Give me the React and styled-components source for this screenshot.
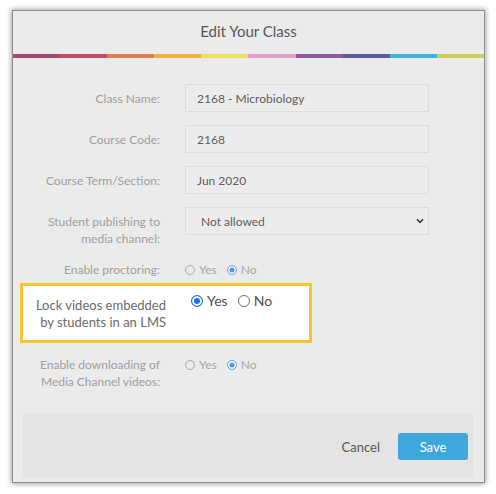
import React from 'react'
import styled, { createGlobalStyle } from 'styled-components'

const stripeColors = ['#a44b72', '#cb4a63', '#e07d4c', '#efb540', '#ebdf5e', '#e0a0c6', '#8f5b9c', '#5b5b9c', '#3fb6dc', '#c9d05c']

const GlobalStyle = createGlobalStyle`
  body {
    margin: 0;
    background: #fff;
    font-family: Lato, "Open Sans", sans-serif;
  }
`

const Page = styled.div`
  padding: 10px 11px 11px 12px;
`

const Dialog = styled.div`
  width: 473px;
  height: 473px;
  box-sizing: border-box;
  background: #ebebeb;
  border: 1px solid #8e8e8e;
  box-shadow: 0 0 5px 1px rgba(0, 0, 0, 0.35);
  display: flex;
  flex-direction: column;
`

const Title = styled.h1`
  margin: 0;
  height: 43px;
  padding-bottom: 4px;
  box-sizing: border-box;
  display: flex;
  align-items: center;
  justify-content: center;
  font-size: 15px;
  font-weight: 400;
  color: #575757;
`

const Stripe = styled.div`
  display: flex;
  height: 4px;
`

const Segment = styled.span`
  flex: 1;
  background: ${p => p.$color};
`

const Body = styled.div`
  padding-top: 26px;
`

const Row = styled.div`
  display: grid;
  grid-template-columns: 147px 244px;
  column-gap: 25px;
  align-items: ${p => p.$align || 'center'};
  margin-bottom: ${p => p.$gap || 0}px;
`

const Label = styled.label`
  text-align: right;
  font-size: 12px;
  line-height: 17px;
  color: #a0a0a0;
  padding-top: ${p => p.$offset || 0}px;
`

const TextInput = styled.input`
  height: 28px;
  box-sizing: border-box;
  border: 1px solid #dcdcdc;
  background: #ececec;
  padding: 0 11px;
  font-family: inherit;
  font-size: 12px;
  color: #5e5e5e;
  outline: none;
`

const SelectWrap = styled.div`
  position: relative;
  height: 28px;
  svg {
    position: absolute;
    right: 5px;
    top: 11px;
    pointer-events: none;
  }
`

const Select = styled.select`
  appearance: none;
  width: 100%;
  height: 28px;
  box-sizing: border-box;
  border: 1px solid #dcdcdc;
  background: #ececec;
  padding: 0 15px;
  font-family: inherit;
  font-size: 12px;
  color: #5e5e5e;
  outline: none;
`

const RadioGroup = styled.div`
  display: flex;
  align-items: center;
  gap: 10px;
  padding-top: ${p => p.$offset || 0}px;
`

const RadioOption = styled.label`
  display: flex;
  align-items: center;
  gap: 4px;
  font-size: ${p => (p.$strong ? 14 : 12)}px;
  line-height: 17px;
  color: ${p => (p.$strong ? '#4f4f4f' : '#a6a6a6')};
`

const Dot = styled.span`
  width: ${p => (p.$strong ? 12 : 10)}px;
  height: ${p => (p.$strong ? 12 : 10)}px;
  box-sizing: border-box;
  border-radius: 50%;
  border: 1px solid ${p => (p.$checked ? (p.$strong ? '#1a73e8' : '#7aa8e6') : (p.$strong ? '#6e6e6e' : '#a9a9a9'))};
  background: ${p => (p.$checked ? (p.$strong ? '#1a73e8' : '#5a93e0') : 'transparent')};
  box-shadow: ${p => (p.$checked ? `inset 0 0 0 ${p.$strong ? 2 : 1.5}px #fff` : 'none')};
`

const Highlight = styled.div`
  margin: 5px 0 13px 7px;
  width: 292px;
  height: 60px;
  box-sizing: border-box;
  border: 3px solid #f6c631;
  background: #fff;
  display: grid;
  grid-template-columns: 143px 1fr;
  column-gap: 25px;
  align-items: start;
`

const StrongLabel = styled.label`
  text-align: right;
  font-size: 13px;
  line-height: 17px;
  color: #6b6b6b;
  padding-top: 11px;
`

const Footer = styled.div`
  margin: auto 11px 5px 10px;
  height: 64px;
  background: #e4e4e4;
  display: flex;
  justify-content: flex-end;
  align-items: center;
  gap: 18px;
  padding: 3px 5px 0 0;
  box-sizing: border-box;
`

const CancelButton = styled.button`
  border: none;
  background: none;
  padding: 0;
  font-family: inherit;
  font-size: 13px;
  color: #585858;
`

const SaveButton = styled.button`
  width: 70px;
  height: 27px;
  border: none;
  border-radius: 3px;
  background: #3ea7dc;
  color: #fff;
  font-family: inherit;
  font-size: 13px;
`

function Radios({ value, strong, offset }) {
  return (
    <RadioGroup $offset={offset}>
      {['Yes', 'No'].map(opt => (
        <RadioOption key={opt} $strong={strong}>
          <Dot $checked={value === opt} $strong={strong} />
          {opt}
        </RadioOption>
      ))}
    </RadioGroup>
  )
}

export default function App() {
  return (
    <>
      <GlobalStyle />
      <Page>
        <Dialog>
          <Title>Edit Your Class</Title>
          <Stripe>
            {stripeColors.map(c => <Segment key={c} $color={c} />)}
          </Stripe>
          <Body>
            <Row $gap={13}>
              <Label>Class Name:</Label>
              <TextInput readOnly defaultValue="2168 - Microbiology" />
            </Row>
            <Row $gap={13}>
              <Label>Course Code:</Label>
              <TextInput readOnly defaultValue="2168" />
            </Row>
            <Row $gap={13}>
              <Label>Course Term/Section:</Label>
              <TextInput readOnly defaultValue="Jun 2020" />
            </Row>
            <Row $gap={14} $align="start">
              <Label $offset={6}>Student publishing to<br />media channel:</Label>
              <SelectWrap>
                <Select defaultValue="no">
                  <option value="no">Not allowed</option>
                  <option value="yes">Allowed</option>
                </Select>
                <svg width="8" height="6" viewBox="0 0 8 6">
                  <path d="M1 1.2 4 4.4 7 1.2" fill="none" stroke="#3c3c3c" strokeWidth="1.6" />
                </svg>
              </SelectWrap>
            </Row>
            <Row>
              <Label>Enable proctoring:</Label>
              <Radios value="No" />
            </Row>
            <Highlight>
              <StrongLabel>Lock videos embedded<br />by students in an LMS</StrongLabel>
              <Radios value="Yes" strong offset={6} />
            </Highlight>
            <Row $align="start">
              <Label>Enable downloading of<br />Media Channel videos:</Label>
              <Radios value="No" />
            </Row>
          </Body>
          <Footer>
            <CancelButton>Cancel</CancelButton>
            <SaveButton>Save</SaveButton>
          </Footer>
        </Dialog>
      </Page>
    </>
  )
}
